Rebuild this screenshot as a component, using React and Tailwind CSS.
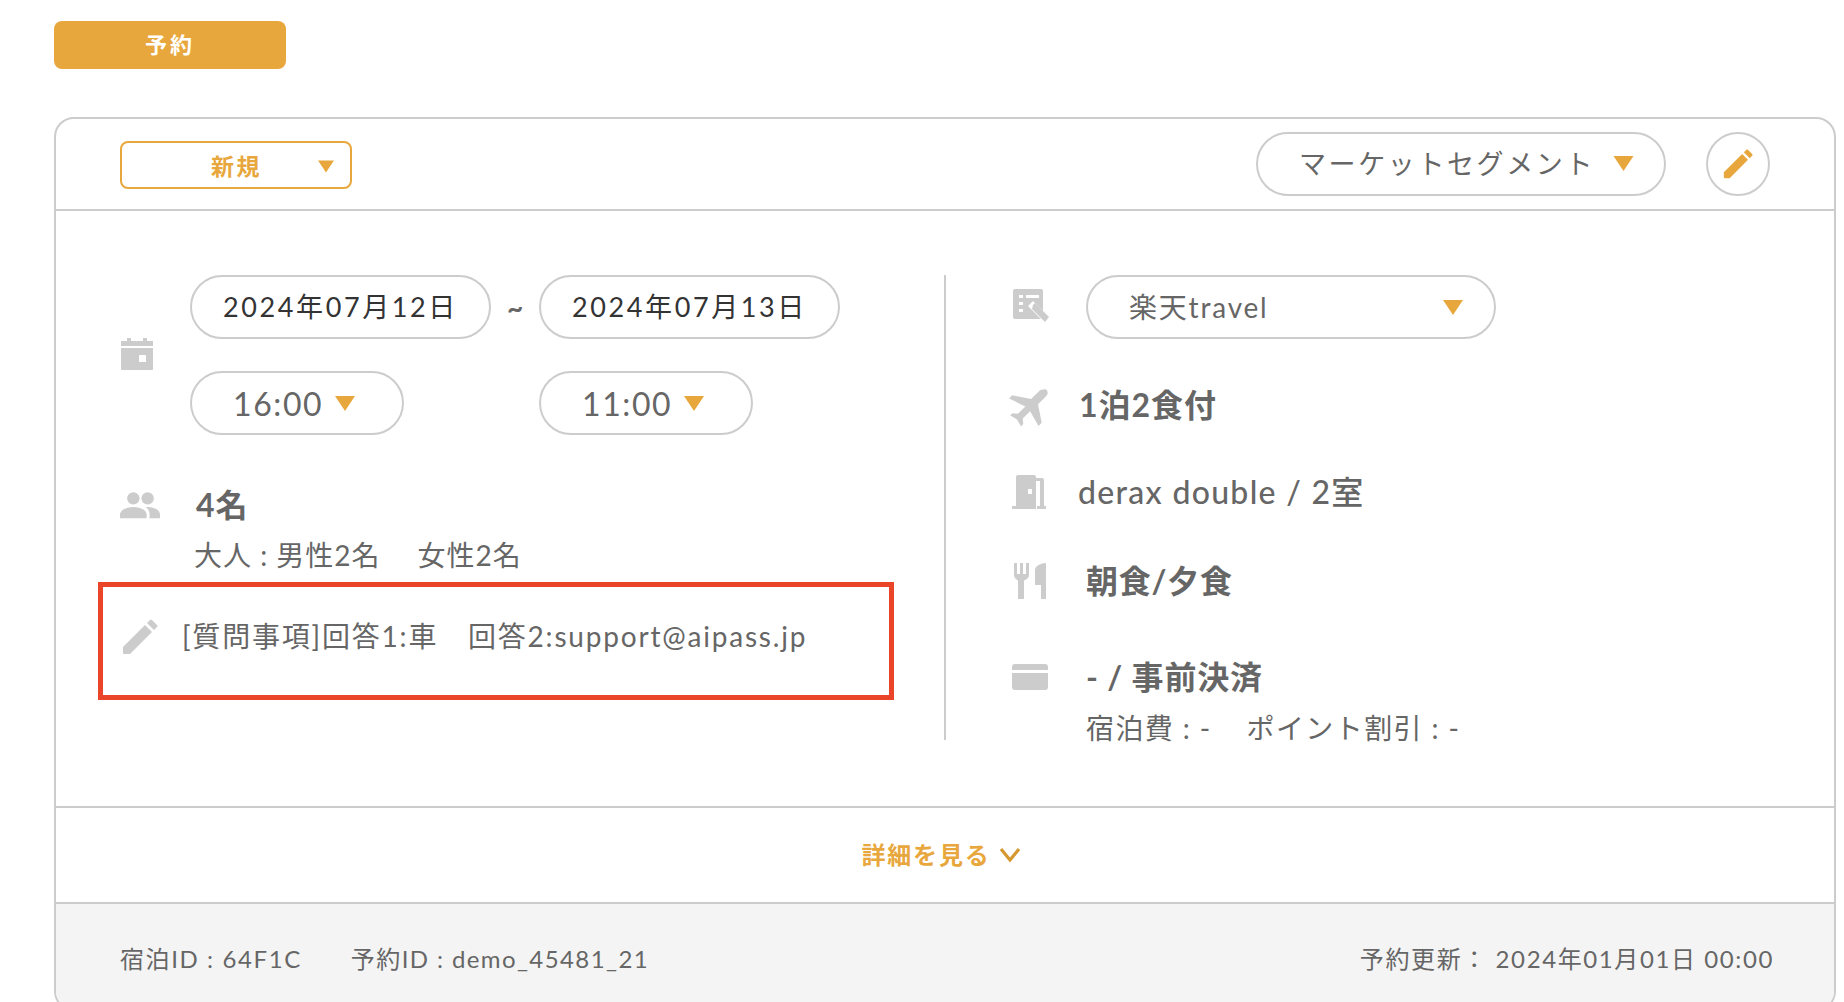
function Tri({ className = "" }) {
  return (
    <svg viewBox="0 0 20 15" className={className} aria-hidden="true">
      <path d="M0 0h20L10 15z" fill="#e8a73c" />
    </svg>
  );
}

function Pencil({ className = "", fill }) {
  return (
    <svg viewBox="0 0 36 36" className={className} aria-hidden="true">
      <path d="M1 28 23 6l7 7L8 35H2a1 1 0 0 1-1-1z" fill={fill} />
      <path d="m25 4 3-3a1.4 1.4 0 0 1 2 0l5 5a1.4 1.4 0 0 1 0 2l-3 3z" fill={fill} />
    </svg>
  );
}

function Pill({ className = "", children }) {
  return (
    <div className={`flex h-16 items-center rounded-full border-2 border-[#cccccc] bg-white ${className}`}>
      {children}
    </div>
  );
}

function DatePill({ children }) {
  return (
    <Pill className="w-[301px] justify-center text-[27px] tracking-[2.6px] text-[#333333]">{children}</Pill>
  );
}

function TimePill({ children }) {
  return (
    <Pill className="w-[214px] pl-[41px] text-[32px] tracking-[1.6px] text-[#666666]">
      <span className="mt-[2px]">{children}</span>
      <Tri className="ml-[12px] h-[15px] w-[20px]" />
    </Pill>
  );
}

function InfoRow({ icon, textClass, children, className = "" }) {
  return (
    <div className={`-ml-[2px] flex h-10 items-center ${className}`}>
      <div className="flex w-9 items-center justify-center">{icon}</div>
      <div className={`whitespace-nowrap text-[#666666] ${textClass}`}>{children}</div>
    </div>
  );
}

export default function App() {
  return (
    <div
      className="h-[1002px] w-[1844px] overflow-hidden bg-white pl-[54px] pt-[21px]"
      style={{ fontFamily: '"Lato", "Noto Sans CJK JP", sans-serif' }}
    >
      <div className="flex h-[48px] w-[232px] items-center justify-center rounded-lg bg-[#e8a73c] text-[22px] font-bold tracking-[3px] text-white">
        <span className="-mt-[1px]">予約</span>
      </div>

      <div className="mt-[48px] h-[894px] w-[1782px] overflow-hidden rounded-[20px] border-2 border-[#cccccc]">
        {/* header */}
        <div className="flex h-[92px] items-start border-b-2 border-[#cccccc] pl-[64px]">
          <div className="mt-[22px] flex h-[48px] w-[232px] items-center rounded-lg border-2 border-[#e8a73c] pl-[89px] text-[23px] font-bold tracking-[2.4px] text-[#e8a73c]">
            <span className="mt-[3px]">新規</span>
            <Tri className="ml-[56px] mt-[3px] h-[13px] w-[16px]" />
          </div>
          <div className="ml-auto mr-[64px] mt-[13px] flex items-center gap-[40px]">
            <Pill className="w-[410px] pl-[41px] text-[27px] tracking-[2.6px] text-[#666666]">
              <span>マーケットセグメント</span>
              <Tri className="ml-[18px] mb-[2px] h-[15px] w-[21px]" />
            </Pill>
            <div className="flex h-16 w-16 items-center justify-center rounded-full border-2 border-[#cccccc]">
              <Pencil className="h-[30px] w-[30px]" fill="#e8a73c" />
            </div>
          </div>
        </div>

        {/* body */}
        <div className="flex h-[595px] pt-[64px]">
          <div className="w-[888px] pl-[65px]">
            <div className="flex items-center gap-[37px]">
              <svg viewBox="0 0 32 32" className="-mt-[2px] h-[32px] w-[32px]" aria-hidden="true">
                <path d="M0 3h6V0h4v3h12V0h4v3h6v5H0z" fill="#cccccc" />
                <path fillRule="evenodd" d="M0 10h32v21a1 1 0 0 1-1 1H1a1 1 0 0 1-1-1zm18 7v7h7v-7z" fill="#cccccc" />
              </svg>
              <div className="flex flex-col gap-8">
                <div className="flex items-center">
                  <DatePill>2024年07月12日</DatePill>
                  <span className="w-[48px] text-center text-[28px] font-bold text-[#666666]">~</span>
                  <DatePill>2024年07月13日</DatePill>
                </div>
                <div className="flex gap-[135px]">
                  <TimePill>16:00</TimePill>
                  <TimePill>11:00</TimePill>
                </div>
              </div>
            </div>

            <div className="-ml-[1px] mt-[50px] flex items-center gap-[36px]">
              <svg viewBox="0 0 42 28" className="h-[28px] w-[40px]" aria-hidden="true">
                <circle cx="14" cy="7" r="6.5" fill="#cccccc" />
                <circle cx="29" cy="7" r="6.5" fill="#cccccc" />
                <path d="M0 28v-4c0-5 8-8 14-8s14 3 14 8v4z" fill="#cccccc" />
                <path d="M29 16c6 0 13 3 13 8v4H31v-5c0-3-2-5.500-4-7z" fill="#cccccc" />
              </svg>
              <span className="text-[32px] font-bold leading-10 tracking-[1px] text-[#666666]">4名</span>
            </div>
            <div className="mt-[14px] flex pl-[73px] text-[28px] leading-8 tracking-[1px] text-[#666666]">
              <span>大人 : 男性2名</span>
              <span className="ml-[37px]">女性2名</span>
            </div>

            <div className="-ml-[23px] mt-[11px] flex h-[118px] w-[796px] items-start border-[5px] border-[#ea4528] pl-[19px] pt-[33px]">
              <Pencil className="-mt-[1px] h-[36px] w-[36px]" fill="#cccccc" />
              <span className="ml-[24px] whitespace-nowrap text-[28px] leading-8 tracking-[1.8px] text-[#666666]">
                [質問事項]回答1:車　回答2:support@aipass.jp
              </span>
            </div>
          </div>

          <div className="h-[465px] w-[2px] bg-[#cccccc]" />

          <div className="pl-[67px]">
            <div className="flex items-center">
              <div className="w-[36px]">
                <svg viewBox="0 0 36 36" className="h-[36px] w-[36px]" aria-hidden="true">
                  <path fillRule="evenodd" d="M2 0h26a2 2 0 0 1 2 2v20L20 12l-5 5 13 13H2a2 2 0 0 1-2-2V2a2 2 0 0 1 2-2zm4 6v3h4V6zm7 0v3h13V6zM6 13v3h4v-3zm0 7v3h4v-3z" fill="#cccccc" />
                  <path d="m20 16 2-2 14 14-4 5-13-13z" fill="#cccccc" />
                </svg>
              </div>
              <Pill className="ml-[37px] w-[410px] justify-between pl-[41px] pr-[31px] text-[28px] tracking-[1.8px] text-[#666666]">
                <span>楽天travel</span>
                <Tri className="h-[15px] w-[20px]" />
              </Pill>
            </div>

            <InfoRow
              className="mt-[46px]"
              textClass="ml-[32px] text-[32px] font-bold tracking-[1px]"
              icon={
                <svg viewBox="0 0 38 36" className="-ml-[2px] mt-[5px] h-[38px] w-[40px] shrink-0" aria-hidden="true">
                  <path d="M37 1.500c1.500 1.500.5 4-1 5.500l-7.500 7.500 3.500 17.500-3 3-8-14-7 7 .5 5-2 2.500-4-6.500L2 25l2.500-2 5 .5 7-7L1 9l3-3 18 3.500L29.500 2c1.500-1.500 6-2.500 7.500-1z" fill="#cccccc" />
                </svg>
              }
            >
              1泊2食付
            </InfoRow>

            <InfoRow
              className="mt-[47px]"
              textClass="ml-[31px] text-[32px] font-medium tracking-[1.3px]"
              icon={
                <svg viewBox="0 0 34 34" className="h-[34px] w-[34px]" aria-hidden="true">
                  <path fillRule="evenodd" d="M6 0h16a2 2 0 0 1 2 2v1h6a2 2 0 0 1 2 2v26h2v3H25v-3h3V6h-4v28H0v-3h4V2a2 2 0 0 1 2-2zm10 14v5h4v-5z" fill="#cccccc" />
                </svg>
              }
            >
              derax double / 2室
            </InfoRow>

            <InfoRow
              className="mt-[49px]"
              textClass="ml-[39px] text-[32px] font-bold tracking-[0.8px]"
              icon={
                <svg viewBox="0 0 34 36" className="h-[36px] w-[34px]" aria-hidden="true">
                  <path d="M2 0h3v11h3V0h3v11h3V0h3v12c0 3-3 5-5 5.500V36h-6V17.500C5 17 2 15 2 12z" fill="#cccccc" />
                  <path d="M34 0v36h-5V22h-6V7c0-4 6-7 11-7z" fill="#cccccc" />
                </svg>
              }
            >
              朝食/夕食
            </InfoRow>

            <InfoRow
              className="mt-[56px]"
              textClass="ml-[39px] text-[32px] font-bold tracking-[0.8px]"
              icon={
                <svg viewBox="0 0 36 26" className="ml-[1px] h-[26px] w-[36px] shrink-0" aria-hidden="true">
                  <path d="M3 0h30a3 3 0 0 1 3 3v3H0V3a3 3 0 0 1 3-3z" fill="#cccccc" />
                  <path d="M0 9h36v14a3 3 0 0 1-3 3H3a3 3 0 0 1-3-3z" fill="#cccccc" />
                </svg>
              }
            >
              - / 事前決済
            </InfoRow>

            <div className="mt-[15px] flex pl-[73px] text-[28px] leading-8 tracking-[1.4px] text-[#666666]">
              <span>宿泊費 : -</span>
              <span className="ml-[35px]">ポイント割引 : -</span>
            </div>
          </div>
        </div>

        {/* details toggle */}
        <div className="flex h-[98px] items-center justify-center border-y-2 border-[#cccccc] pr-[7px] text-[24px] font-bold tracking-[1.8px] text-[#e8a73c]">
          <span>詳細を見る</span>
          <svg viewBox="0 0 24 20" className="ml-[7px] h-[20px] w-[24px]" aria-hidden="true">
            <path d="m3 4 9 11 9-11" fill="none" stroke="#d6972f" strokeWidth="3.200" />
          </svg>
        </div>

        {/* footer */}
        <div className="flex h-[109px] items-start bg-[#f4f4f4] pl-[64px] pr-[60px] pt-[39px] text-[24px] leading-8 tracking-[1.6px] text-[#666666]">
          <span>宿泊ID : 64F1C</span>
          <span className="ml-[49px] tracking-[1.4px]">予約ID : demo_45481_21</span>
          <span className="ml-auto">予約更新： 2024年01月01日 00:00</span>
        </div>
      </div>
    </div>
  );
}
